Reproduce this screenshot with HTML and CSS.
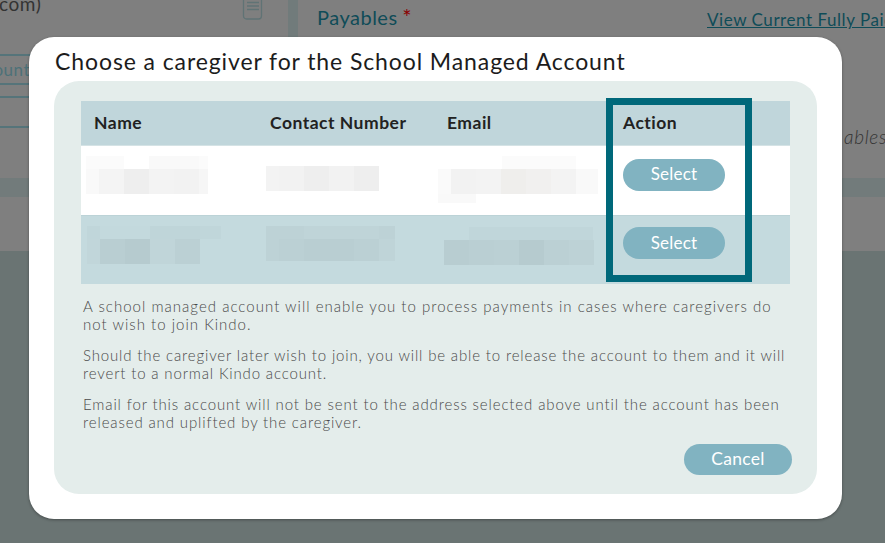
FILE: index.html
```html
<!DOCTYPE html>
<html lang="en">
<head>
<meta charset="utf-8">
<title>Choose a caregiver</title>
<link rel="stylesheet" href="styles.css">
</head>
<body>
<div class="page">
  <div class="backdrop-top">
    <div class="left-panel">
      <span class="email-end">com)</span>
      <svg class="doc-icon" width="22" height="22" viewBox="0 0 22 22" fill="none" stroke="#607375" stroke-width="1.300"><path d="M1.500 -6h18v22a3 3 0 0 1-3 3H4.500a3 3 0 0 1-3-3z"/><path d="M5 2.500h12M5 6h12M5 9.500h12"/></svg>
      <div class="field field-a"><span class="account-tab">Account</span></div>
      <div class="field field-b"></div>
    </div>
    <div class="gutter"></div>
    <div class="right-panel">
      <h2 class="payables">Payables <b>*</b></h2>
      <a class="fully-paid">View Current Fully Paid</a>
      <em class="hint">ables</em>
    </div>
  </div>
  <div class="band-dark"></div>
  <div class="band-light"></div>
  <div class="backdrop-bottom"></div>
</div>

<div class="modal">
  <h1 class="modal-title">Choose a caregiver for the School Managed Account</h1>
  <div class="modal-body">
    <div class="table-wrap">
      <table class="care-table">
        <thead>
          <tr><th class="c-name">Name</th><th class="c-num">Contact Number</th><th class="c-mail">Email</th><th class="c-act">Action</th></tr>
        </thead>
        <tbody>
          <tr class="row-white">
            <td><div class="blur b-name-1"></div></td>
            <td><div class="blur b-num-1"></div></td>
            <td><div class="blur b-mail-1"></div></td>
            <td class="action-cell"><button class="pill select">Select</button></td>
          </tr>
          <tr class="row-blue">
            <td><div class="blur b-name-2"></div></td>
            <td><div class="blur b-num-2"></div></td>
            <td><div class="blur b-mail-2"></div></td>
            <td class="action-cell"><button class="pill select">Select</button></td>
          </tr>
        </tbody>
      </table>
      <div class="highlight"></div>
    </div>
    <div class="notes">
      <p class="note-a">A school managed account will enable you to process payments in cases where caregivers do<br>not wish to join Kindo.</p>
      <p class="note-b">Should the caregiver later wish to join, you will be able to release the account to them and it will<br>revert to a normal Kindo account.</p>
      <p class="note-c">Email for this account will not be sent to the address selected above until the account has been<br>released and uplifted by the caregiver.</p>
    </div>
    <div class="footer"><button class="pill cancel">Cancel</button></div>
  </div>
</div>
</body>
</html>
```

FILE: styles.css
```css
* { box-sizing: border-box; }
html, body { margin: 0; height: 100%; overflow: hidden; }
body { width: 885px; height: 543px; position: relative; background: #6a7473; font-family: Lato, "Noto Sans", sans-serif; }

.page { display: flex; flex-direction: column; height: 543px; }
.backdrop-top { display: flex; height: 178px; background: #7f7f7f; }
.left-panel { width: 288px; position: relative; overflow: hidden; }
.gutter { width: 10px; background: #717b7b; }
.right-panel { flex: 1; position: relative; overflow: hidden; }
.band-dark { height: 19px; background: #727b7b; }
.band-light { height: 54px; background: #7f7f7f; }
.backdrop-bottom { flex: 1; background: #6a7473; }

.email-end { position: absolute; left: -1px; top: -8px; font-size: 19px; letter-spacing: .6px; color: #333; }
.doc-icon { position: absolute; left: 242px; top: 0; }
.field { position: absolute; left: 0; width: 40px; border-top: 2px solid #55747a; border-bottom: 2px solid #55747a; }
.field-a { top: 54px; height: 31px; }
.field-b { top: 96px; height: 32px; }
.account-tab { position: absolute; right: 10px; top: 3px; font-size: 17px; letter-spacing: .5px; color: #4d7178; white-space: nowrap; }
.payables { position: absolute; left: 19px; top: 5px; margin: 0; font-size: 20px; font-weight: 400; letter-spacing: .5px; word-spacing: -1px; color: #0f4c58; }
.payables b { color: #8b0000; font-weight: 400; font-size: 22px; line-height: 20px; }
.fully-paid { position: absolute; left: 409px; top: 9px; font-size: 17px; letter-spacing: .55px; color: #0f4c58; text-decoration: underline; white-space: nowrap; }
.hint { position: absolute; left: 546px; top: 125px; font-size: 19px; letter-spacing: .7px; color: #333; font-weight: 300; }

.modal { position: absolute; left: 29px; top: 37px; width: 813px; height: 482px; background: #fff; border-radius: 25px; padding: 12px 26px 25px 25px; box-shadow: 0 1px 3px rgba(0,0,0,.35); }
.modal-title { margin: 0 0 0 1px; height: 32px; font-size: 23px; line-height: 24px; font-weight: 400; letter-spacing: .9px; color: #1c1c1c; white-space: nowrap; }
.modal-body { width: 763px; height: 413px; background: #e4edeb; border-radius: 25px; padding: 20px 27px 0; }

.table-wrap { position: relative; }
.care-table { width: 709px; border-collapse: separate; border-spacing: 0; table-layout: fixed; }
.care-table th { height: 45px; padding: 0 0 2px 13px; text-align: left; font-size: 17.500px; font-weight: 700; letter-spacing: .5px; color: #222; background: #c0d6db; border-bottom: 1px solid #d5e3e5; }
.c-name { width: 176px; }
.c-num { width: 177px; }
.c-mail { width: 176px; }
.care-table td { height: 69px; padding: 0; vertical-align: top; }
.row-white td { background: #fff; }
.row-blue td { background: #c4dade; border-top: 1px solid #bcd3d7; }

.blur { background-repeat: no-repeat; }
.b-name-1 {
  margin: 10px 0 0 5px; width: 122px; height: 38px;
  background-image:
    linear-gradient(90deg, #fbfbfb 0 38px, #fff 38px 63px, #f9f9f9 63px 113px, #fbfbfb 113px),
    linear-gradient(90deg, #f9f9f9 0 13px, #f4f4f4 13px 38px, #eee 38px 63px, #f3f3f3 63px 88px, #f2f2f2 88px 113px, #f6f6f6 113px);
  background-size: 100% 13px, 100% 25px;
  background-position: 0 0, 0 13px;
}
.b-num-1 {
  margin: 20px 0 0 9px; width: 113px; height: 25px;
  background-image: linear-gradient(90deg, #f3f3f3 0 13px, #f2f2f2 13px 38px, #eeeeee 38px 63px, #f2f2f2 63px 88px, #eeeeee 88px);
}
.b-mail-1 {
  margin: 10px 0 0 4px; width: 160px; height: 47px;
  background-image:
    linear-gradient(90deg, transparent 0 64px, #fbfbfb 64px 138px, transparent 138px),
    linear-gradient(90deg, #fafafa 0 13px, #f2f2f2 13px 38px, #f3f3f3 38px 63px, #efeeec 63px 88px, #f1f0ef 88px 113px, #f3f3f3 113px 138px, #f9f9f9 138px),
    linear-gradient(90deg, #f9f9f9 0 38px, transparent 38px);
  background-size: 100% 13px, 100% 25px, 100% 9px;
  background-position: 0 0, 0 13px, 0 38px;
}
.b-name-2 {
  margin: 10px 0 0 6px; width: 134px; height: 38px;
  background-image:
    linear-gradient(90deg, #c0d6da 0 13px, #c3d9dd 13px 63px, #bfd5d9 63px 113px, #c0d6da 113px),
    linear-gradient(90deg, #c1d6da 0 13px, #b9ced2 13px 38px, #b6cbcf 38px 63px, #c0d5d9 63px 88px, #bbd0d4 88px 113px, transparent 113px);
  background-size: 100% 13px, 100% 25px;
  background-position: 0 0, 0 13px;
}
.b-num-2 {
  margin: 10px 0 0 9px; width: 129px; height: 35px;
  background-image:
    linear-gradient(90deg, #bdd2d6 0 38px, #bfd4d8 38px 113px, #bdd2d6 113px),
    linear-gradient(90deg, #bdd2d6 0 13px, #bbd0d4 13px 38px, #b9ced2 38px 88px, #bbd0d4 88px 113px, #bfd4d8 113px);
  background-size: 100% 13px, 100% 22px;
  background-position: 0 0, 0 13px;
}
.b-mail-2 {
  margin: 11px 0 0 10px; width: 150px; height: 38px;
  background-image:
    linear-gradient(90deg, transparent 0 25px, #c0d6da 25px 149px, transparent 149px),
    linear-gradient(90deg, #b8cdd1 0 25px, #bacfd3 25px 50px, #bbd0d4 50px 75px, #b6cbcf 75px 100px, #bbd0d4 100px 125px, #bdd2d6 125px);
  background-size: 100% 13px, 100% 25px;
  background-position: 0 0, 0 13px;
}

.action-cell { padding: 13px 0 0 13px !important; }
.row-blue .action-cell { padding-top: 11px !important; }
.pill { display: block; border: 0; border-radius: 16px; background: #81b3c1; color: #fff; font-family: inherit; font-size: 17px; letter-spacing: .2px; padding: 0 0 2px; }
.select { width: 102px; height: 32px; }
.row-white .select { padding-bottom: 4px; }
.highlight { position: absolute; left: 525px; top: -3px; width: 146px; height: 184px; border: 7px solid #00687a; pointer-events: none; }

.notes { padding: 13px 0 0 2px; font-size: 15px; line-height: 18px; font-weight: 300; color: #4a4a4a; white-space: nowrap; }
.notes p { margin: 0 0 13px; }
.note-a { letter-spacing: 1.02px; }
.note-b { letter-spacing: .85px; }
.note-c { letter-spacing: .87px; }
.footer { display: flex; justify-content: flex-end; margin: 5px -2px 0 0; }
.cancel { width: 108px; height: 31px; font-size: 17.500px; letter-spacing: .3px; }
```
